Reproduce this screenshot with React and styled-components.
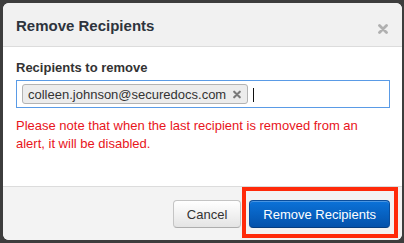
import React from "react";
import styled, { createGlobalStyle } from "styled-components";

const GlobalStyle = createGlobalStyle`
  html, body {
    margin: 0;
    padding: 0;
    background: #3d3d3d;
    font-family: "Liberation Sans", Arial, sans-serif;
  }
  * { box-sizing: border-box; }
`;

// the page behind the dialog
const Backdrop = styled.div`
  width: 404px;
  height: 243px;
  padding: 3px 2px 3px 3px;
  background: #3d3d3d;
`;

const Modal = styled.div`
  width: 399px;
  height: 237px;
  background: #fff;
  border-radius: 6px;
  overflow: hidden;
  display: flex;
  flex-direction: column;
`;

const Header = styled.div`
  flex: none;
  height: 44px;
  padding: 0 13px;
  background: #f1f1f1;
  border-bottom: 1px solid #dcdcdc;
  display: flex;
  align-items: center;
  justify-content: space-between;
`;

const Title = styled.h3`
  margin: 3px 0 0;
  font-size: 15px;
  line-height: 18px;
  font-weight: bold;
  color: #2e343d;
`;

const CloseButton = styled.button`
  border: 0;
  padding: 0;
  margin: 8px 1px 0 0;
  background: none;
  width: 10px;
  height: 10px;
  display: flex;
  cursor: pointer;
`;

const Body = styled.div`
  flex: 1;
  background: #fff;
  padding: 12px 12px 0 13px;
`;

const Label = styled.label`
  display: block;
  font-size: 13px;
  line-height: 18px;
  font-weight: bold;
  color: #333;
  margin-bottom: 3px;
`;

const TagInput = styled.div`
  height: 28px;
  padding: 3px 5px;
  border: 1px solid #5a9be6;
  display: flex;
  align-items: center;
  background: #fff;
`;

const Tag = styled.span`
  height: 20px;
  padding: 0 6px 0 5px;
  display: flex;
  align-items: center;
  gap: 7px;
  background: #ececec;
  border: 1px solid #b3b3b3;
  border-radius: 3px;
  font-size: 13px;
  color: #333;
`;

const TagRemove = styled.span`
  display: flex;
  width: 8px;
  height: 9px;
  align-items: center;
`;

const Caret = styled.span`
  width: 1px;
  height: 14px;
  margin-left: 5px;
  margin-top: 2px;
  background: #111;
`;

const Warning = styled.p`
  margin: 9px 0 0;
  font-size: 13px;
  line-height: 18px;
  color: #e8141b;
`;

const Footer = styled.div`
  flex: none;
  height: 54px;
  border-top: 1px solid #dcdcdc;
  background: #f3f3f3;
  padding: 13px 12px 0 0;
  display: flex;
  justify-content: flex-end;
  align-items: flex-start;
  gap: 8px;
`;

const Button = styled.button`
  height: 28px;
  padding: 0 13px;
  border-radius: 4px;
  font-family: "Liberation Sans", Arial, sans-serif;
  font-size: 13px;
  cursor: pointer;
  border: 1px solid ${(p) => (p.primary ? "#0a4d9c" : "#c4c4c4")};
  border-bottom-color: ${(p) => (p.primary ? "#053d80" : "#adadad")};
  color: ${(p) => (p.primary ? "#fff" : "#333")};
  background: ${(p) =>
    p.primary
      ? "linear-gradient(#0b72d9, #0452ab)"
      : "linear-gradient(#ffffff, #e4e4e4)"};
  box-shadow: inset 0 1px 0 rgba(255, 255, 255, 0.25);
`;

// red annotation frame drawn around the primary action
const Highlight = styled.span`
  position: relative;
  display: inline-flex;

  &::after {
    content: "";
    position: absolute;
    left: -7px;
    right: -8px;
    top: -13px;
    bottom: -10px;
    border: 4px solid #ff2a0a;
    pointer-events: none;
  }
`;

const Cross = ({ size, color, width }) => (
  <svg width={size} height={size} viewBox="0 0 10 10">
    <path
      d="M1.5 1.5 L8.5 8.5 M8.5 1.5 L1.5 8.5"
      stroke={color}
      strokeWidth={width}
      strokeLinecap="round"
    />
  </svg>
);

export default function App() {
  return (
    <>
      <GlobalStyle />
      <Backdrop>
        <Modal>
          <Header>
            <Title>Remove Recipients</Title>
            <CloseButton aria-label="Close">
              <Cross size={10} color="#b0b0b0" width={2.8} />
            </CloseButton>
          </Header>
          <Body>
            <Label>Recipients to remove</Label>
            <TagInput>
              <Tag>
                colleen.johnson@securedocs.com
                <TagRemove>
                  <Cross size={9} color="#7a7a7a" width={2.6} />
                </TagRemove>
              </Tag>
              <Caret />
            </TagInput>
            <Warning>
              Please note that when the last recipient is removed from an
              alert, it will be disabled.
            </Warning>
          </Body>
          <Footer>
            <Button>Cancel</Button>
            <Highlight>
              <Button primary>Remove Recipients</Button>
            </Highlight>
          </Footer>
        </Modal>
      </Backdrop>
    </>
  );
}
